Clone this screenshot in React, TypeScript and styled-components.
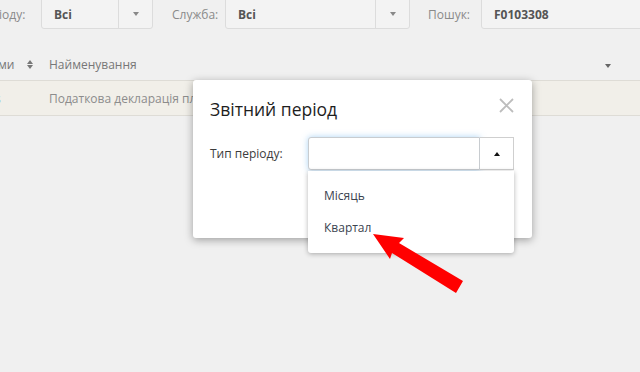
import { ReactElement } from 'react'
import styled, { createGlobalStyle } from 'styled-components'

const GlobalStyle = createGlobalStyle`
  html, body {
    margin: 0;
    padding: 0;
    background: #f0f0f0;
    font-family: 'Open Sans', 'Noto Sans', sans-serif;
  }
`

const Page = styled.div`
  position: relative;
  width: 640px;
  height: 372px;
  overflow: hidden;
  background: #f0f0f0;
`

/* top filter bar */
const FilterBar = styled.div`
  display: flex;
  align-items: center;
  height: 30px;
  margin-top: -1px;
`

const FilterLabel = styled.span<{ $ml: number; $w: number }>`
  width: ${(p) => p.$w}px;
  margin-left: ${(p) => p.$ml}px;
  flex-shrink: 0;
  font-size: 12px;
  color: #8a8a8a;
  white-space: nowrap;
`

const SelectBox = styled.div<{ $w: number }>`
  display: flex;
  height: 30px;
  width: ${(p) => p.$w}px;
  box-sizing: border-box;
  border: 1px solid #dcdcdc;
  border-radius: 0 0 3px 3px;
  background: #f3f3f3;
  flex-shrink: 0;
`

const SelectValue = styled.div`
  flex: 1;
  display: flex;
  align-items: center;
  padding-left: 12px;
  font-size: 12px;
  font-weight: 700;
  color: #555;
`

const SelectBtn = styled.div`
  width: 33px;
  display: flex;
  align-items: center;
  justify-content: center;
  border-left: 1px solid #dcdcdc;
`

const Caret = styled.span<{ $up?: boolean; $color?: string }>`
  width: 0;
  height: 0;
  border-left: 3.5px solid transparent;
  border-right: 3.5px solid transparent;
  ${(p) =>
    p.$up
      ? `border-bottom: 4px solid ${p.$color || '#777'};`
      : `border-top: 4px solid ${p.$color || '#777'};`}
`

/* table */
const HeaderRow = styled.div`
  display: flex;
  align-items: center;
  height: 31px;
  margin-top: 20px;
  font-size: 12px;
  color: #777;
`

const ColFirst = styled.div`
  width: 29px;
  margin-left: -2px;
  white-space: nowrap;
`

const SortIcon = styled.span`
  display: inline-flex;
  flex-direction: column;
  gap: 1px;
  width: 22px;
`

const ColName = styled.div`
  flex: 1;
  white-space: nowrap;
`

const HeaderCaret = styled.div`
  width: 35px;
  display: flex;
  padding-top: 2px;
`

const DataRow = styled.div`
  display: flex;
  align-items: center;
  height: 34px;
  border-top: 1px solid #dedcd6;
  border-bottom: 1px solid #dedcd6;
  background: #f1efe9;
  font-size: 12px;
  color: #8c8c8c;
`

const RowLink = styled.div`
  width: 54px;
  margin-left: -5px;
  color: #6fa8d6;
`

/* modal */
const Modal = styled.div`
  position: absolute;
  left: 193px;
  top: 80px;
  width: 339px;
  height: 158px;
  box-sizing: border-box;
  padding: 15px 17px 0;
  background: #fff;
  border-radius: 3px;
  box-shadow: 0 2px 8px rgba(0, 0, 0, 0.35);
`

const ModalTitle = styled.div`
  font-size: 17.5px;
  line-height: 28px;
  color: #1e1e1e;
`

const CloseBtn = styled.svg`
  position: absolute;
  right: 18px;
  top: 18px;
`

const FormRow = styled.div`
  position: relative;
  display: flex;
  align-items: center;
  margin-top: 14px;
`

const FormLabel = styled.label`
  width: 98px;
  font-size: 12px;
  color: #3c3c3c;
`

const TextInput = styled.div`
  width: 172px;
  height: 33px;
  box-sizing: border-box;
  border: 1px solid #c8ccd0;
  border-radius: 3px 0 0 3px;
  box-shadow: 0 0 6px rgba(102, 175, 233, 0.55);
  background: #fff;
`

const InputBtn = styled.div`
  width: 34px;
  height: 33px;
  box-sizing: border-box;
  border: 1px solid #cfcfcf;
  border-left: none;
  display: flex;
  align-items: center;
  justify-content: center;
  background: #fff;
`

const Dropdown = styled.ul`
  position: absolute;
  left: 98px;
  top: 34px;
  width: 206px;
  margin: 0;
  padding: 9px 0;
  list-style: none;
  background: #fff;
  border-radius: 0 0 3px 3px;
  box-shadow: 0 1px 5px rgba(0, 0, 0, 0.3);
  z-index: 2;
`

const DropItem = styled.li`
  height: 32px;
  line-height: 32px;
  padding-left: 16px;
  font-size: 12px;
  color: #3b4350;
`

const Arrow = styled.svg`
  position: absolute;
  left: 0;
  top: 0;
  pointer-events: none;
  z-index: 3;
`

const periodTypes = ['Місяць', 'Квартал']

export default function App(): ReactElement {
  return (
    <>
      <GlobalStyle />
      <Page>
        <FilterBar>
          <FilterLabel $ml={-1} $w={42}>іоду:</FilterLabel>
          <SelectBox $w={112}>
            <SelectValue>Всі</SelectValue>
            <SelectBtn>
              <Caret $color='#888' />
            </SelectBtn>
          </SelectBox>
          <FilterLabel $ml={19} $w={53}>Служба:</FilterLabel>
          <SelectBox $w={185}>
            <SelectValue>Всі</SelectValue>
            <SelectBtn>
              <Caret $color='#888' />
            </SelectBtn>
          </SelectBox>
          <FilterLabel $ml={18} $w={53}>Пошук:</FilterLabel>
          <SelectBox $w={170}>
            <SelectValue>F0103308</SelectValue>
          </SelectBox>
        </FilterBar>

        <HeaderRow>
          <ColFirst>ми</ColFirst>
          <SortIcon>
            <Caret $up $color='#777' />
            <Caret $color='#777' />
          </SortIcon>
          <ColName>Найменування</ColName>
          <HeaderCaret>
            <Caret $color='#666' />
          </HeaderCaret>
        </HeaderRow>

        <DataRow>
          <RowLink>s</RowLink>
          <ColName>Податкова декларація платника єдиного податку</ColName>
        </DataRow>

        <Modal>
          <ModalTitle>Звітний період</ModalTitle>
          <CloseBtn width='15' height='15' viewBox='0 0 15 15'>
            <path d='M1 1 L14 14 M14 1 L1 14' stroke='#bdbdbd' strokeWidth='1.8' />
          </CloseBtn>
          <FormRow>
            <FormLabel>Тип періоду:</FormLabel>
            <TextInput />
            <InputBtn>
              <Caret $up $color='#111' />
            </InputBtn>
            <Dropdown>
              {periodTypes.map((p) => (
                <DropItem key={p}>{p}</DropItem>
              ))}
            </Dropdown>
          </FormRow>
        </Modal>

        <Arrow width='640' height='372' viewBox='0 0 640 372'>
          <polygon
            points='373,234 404,238 399,243 463,281 456,293 392,253 390,259'
            fill='#ff0000'
          />
        </Arrow>
      </Page>
    </>
  )
}
